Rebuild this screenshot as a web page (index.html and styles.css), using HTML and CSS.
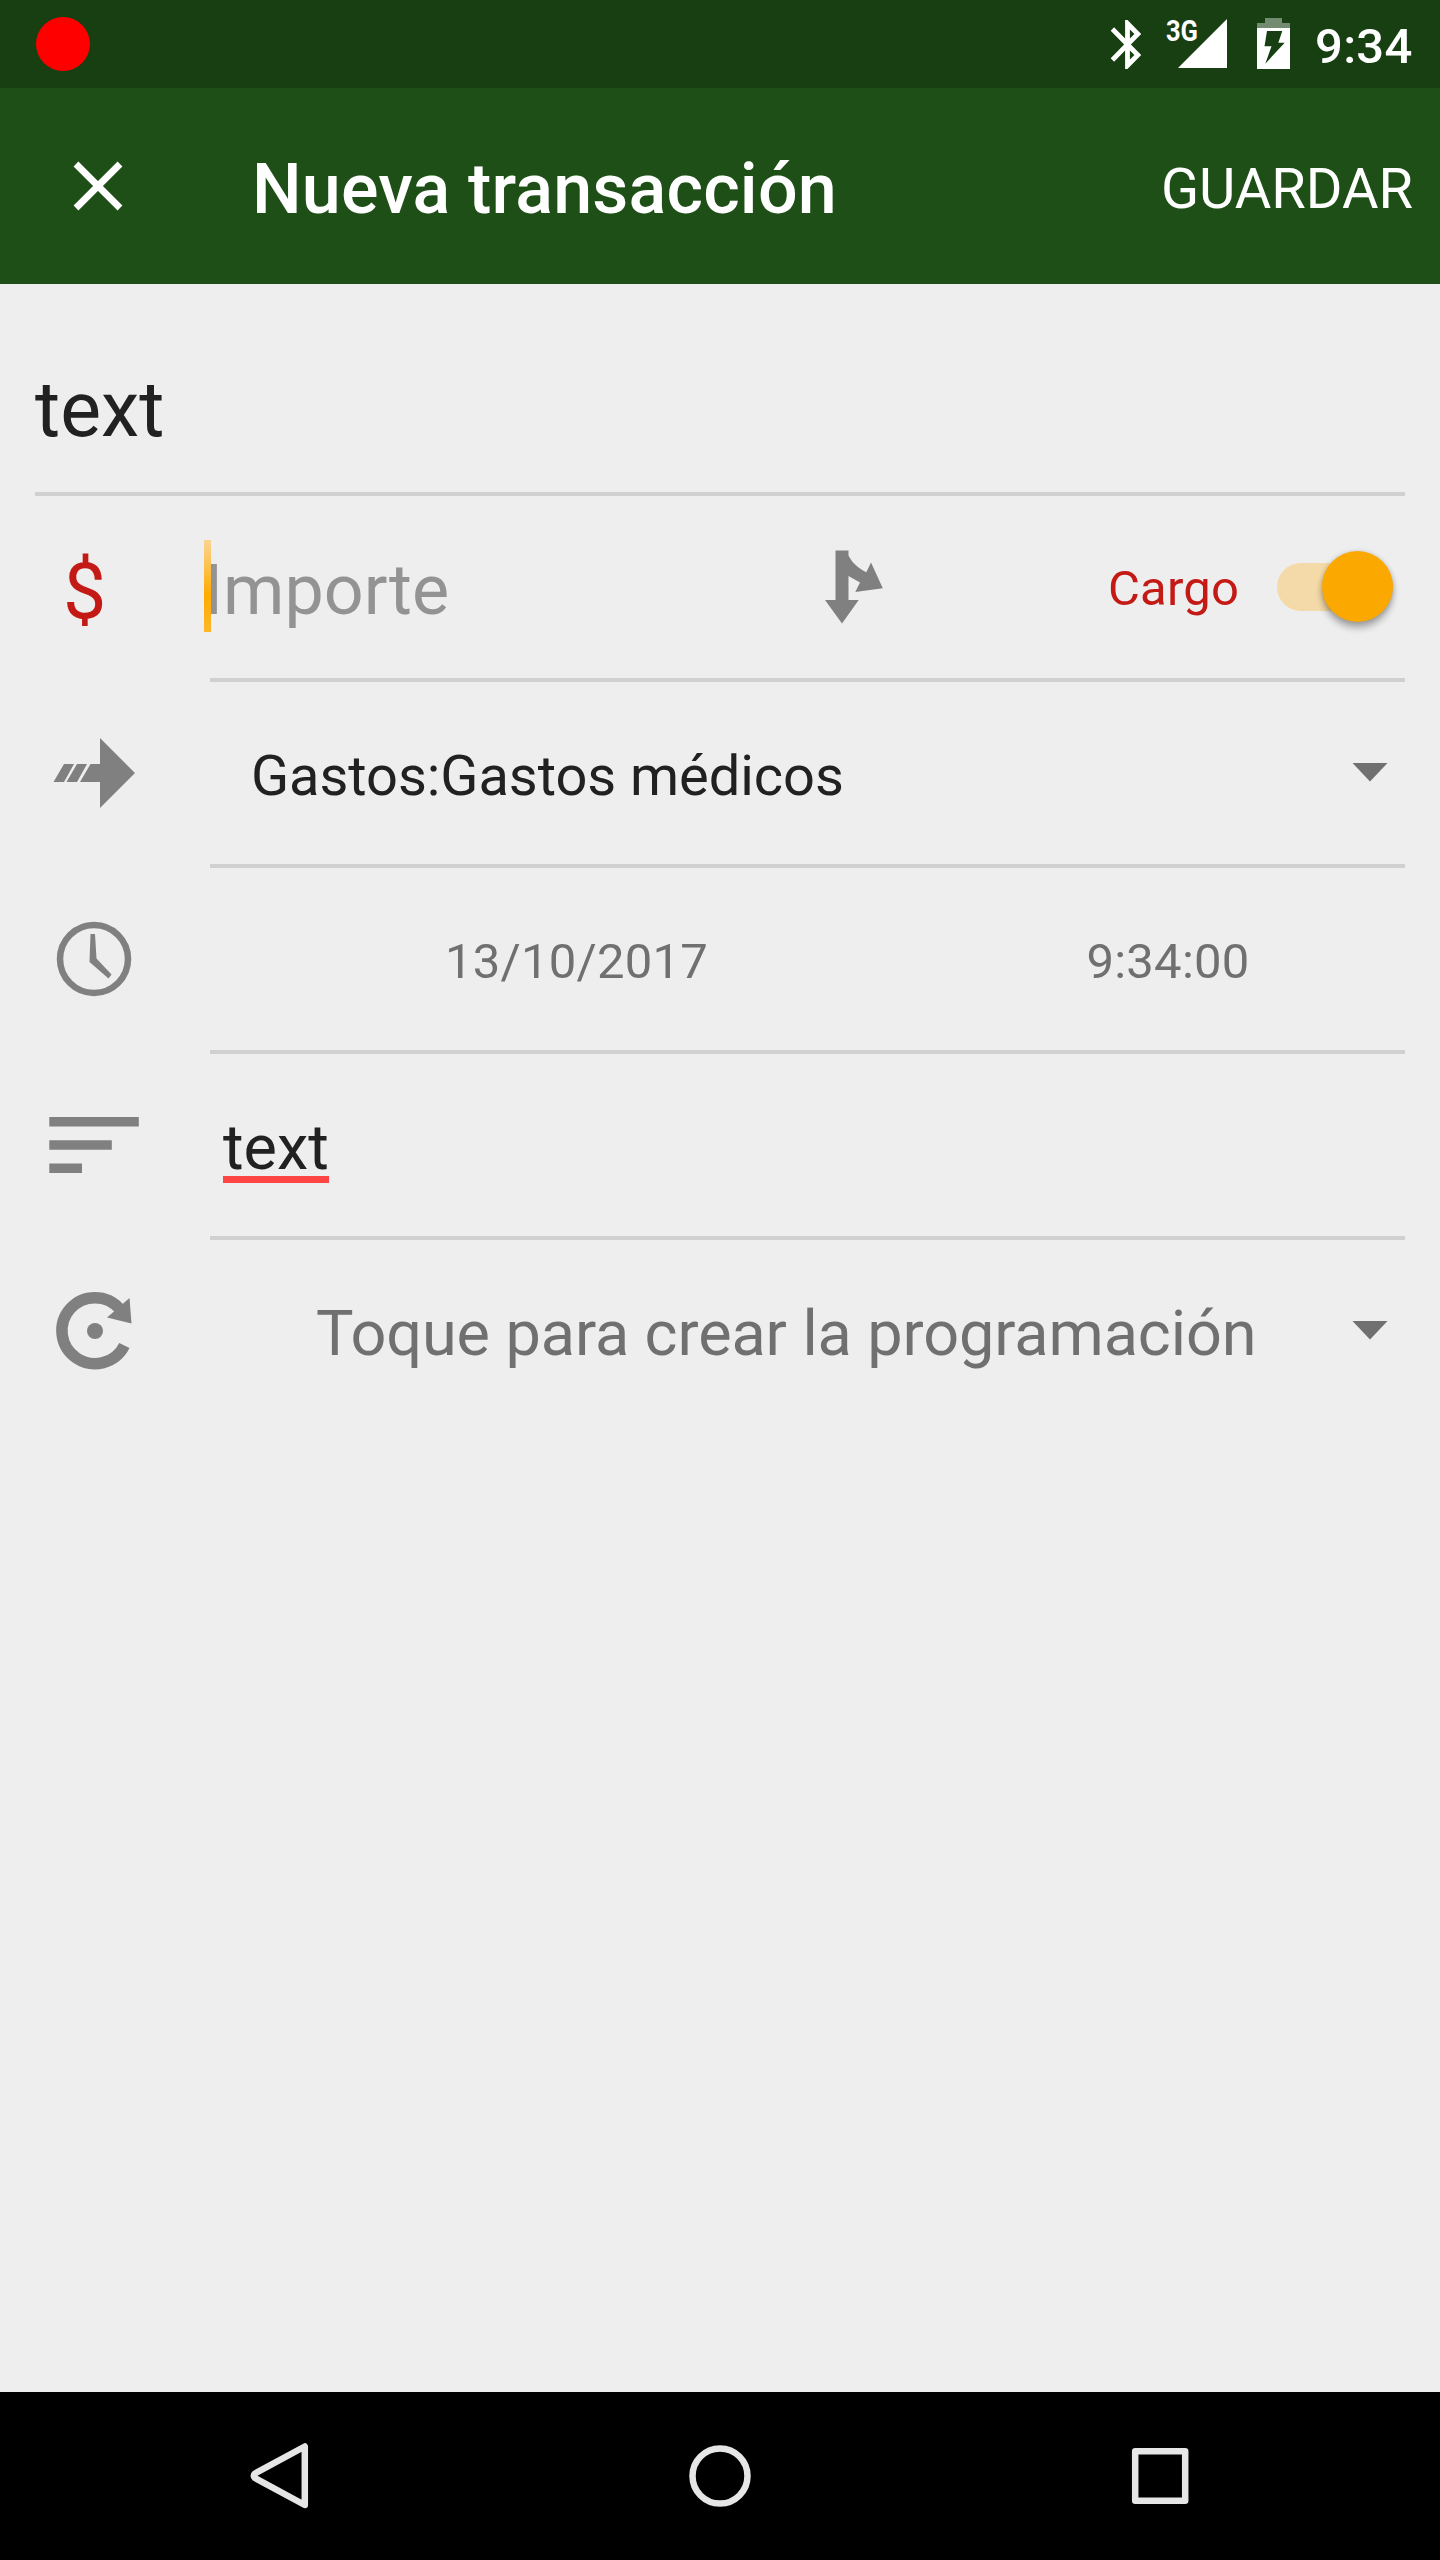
FILE: index.html
```html
<!DOCTYPE html>
<html lang="es">
<head>
<meta charset="utf-8">
<title>Nueva transacción</title>
<link rel="stylesheet" href="styles.css">
</head>
<body>
<div class="screen">
  <div class="status">
    <span class="record"></span>
    <svg class="status-icons" width="200" height="88" viewBox="1100 0 200 88">
      <path fill="#fff" transform="translate(1098.7 15.1) scale(2.4 2.45)" d="M17.71 7.71L12 2h-1v7.59L6.41 5 5 6.41 10.59 12 5 17.59 6.41 19 11 14.41V22h1l5.71-5.71-4.3-4.29 4.3-4.29zM13 5.83l1.88 1.88L13 9.59V5.83zm1.88 10.46L13 18.17v-3.76l1.88 1.88z"/>
      <text class="net" x="1166" y="41" textLength="32" lengthAdjust="spacingAndGlyphs">3G</text>
      <path fill="#fff" d="M1178 68h49V19z"/>
      <path fill="#fff" fill-opacity=".4" d="M1265 18h17v5h8v5h-33v-5h8z"/>
      <path fill="#fff" fill-rule="evenodd" d="M1257 28h33v41h-33zM1267 31l-2.500 15.200h7L1265.300 63.700l19.400-21h-6.400l4-11.700z"/>
    </svg>
    <span class="time">9:34</span>
  </div>
  <header class="toolbar">
    <svg class="close" width="50" height="50" viewBox="73 161 50 50"><path d="M76 164l44 44M120 164l-44 44" stroke="#fff" stroke-width="6.800"/></svg>
    <h1 class="title">Nueva transacción</h1>
    <span class="save">GUARDAR</span>
  </header>
  <main class="form">
    <div class="name">text</div>
    <div class="row">
      <div class="icon currency">$</div>
      <div class="field">
        <div class="amount"><span class="caret"></span>Importe</div>
        <svg class="split" width="60" height="76" viewBox="824 549 60 76"><path fill="#808080" d="M835.500 550.500h13v5c4 8 10 12.500 17.800 16.800l4.700-9.800 11.800 25.800-27.500 3.700 4.700-9.500-11.500-6.500V600h10.200L842 623.500 825 600h10.500z"/></svg>
        <span class="cargo">Cargo</span>
        <span class="switch"><span class="knob"></span></span>
      </div>
    </div>
    <div class="row">
      <svg class="icon" viewBox="35 682 175 182"><path fill="#808080" d="M100 738l35 35-35 35v-26H80l10.500-18h9.500zM64 764h10l-10 18H53.500zM77 764h10l-10 18H66.500z"/></svg>
      <div class="field account"><span>Gastos:Gastos médicos</span><i class="drop"></i></div>
    </div>
    <div class="row">
      <svg class="icon" viewBox="35 868 175 182"><circle cx="94" cy="959" r="34" fill="none" stroke="#808080" stroke-width="6.500"/><path fill="#808080" d="M90.500 934h4.500l1.500 24.500 15 16-3 4L89.500 962z"/></svg>
      <div class="field datetime"><span class="date">13/10/2017</span><span class="hour">9:34:00</span></div>
    </div>
    <div class="row">
      <svg class="icon" viewBox="35 1054 175 182"><path fill="#808080" d="M49.300 1117h89.500v9.500H49.300zM49.300 1140.300h62.500v9.500H49.300zM49.300 1163.600h32.700v9.500H49.300z"/></svg>
      <div class="field notes"><span class="typo">text</span></div>
    </div>
    <div class="row last">
      <svg class="icon" viewBox="35 1240 175 182"><path d="M119.800 1309A33 33 0 1 0 124.400 1345.500" fill="none" stroke="#808080" stroke-width="11.500"/><circle cx="95" cy="1331" r="8" fill="#808080"/><path fill="#808080" d="M129.500 1298l2 25.500-24.500-6z"/></svg>
      <div class="field repeat"><span>Toque para crear la programación</span><i class="drop"></i></div>
    </div>
  </main>
  <nav class="nav">
    <svg width="1440" height="168" viewBox="0 2392 1440 168" fill="none" stroke="#e6e6e6" stroke-width="6.500" stroke-linejoin="round">
      <path d="M304.800 2446.500v58.500L255 2478q-2.500-2.300 0-4.500z"/>
      <circle cx="720" cy="2476" r="27.500"/>
      <rect x="1135.200" y="2451.300" width="50" height="49.500"/>
    </svg>
  </nav>
</div>
</body>
</html>
```
FILE: styles.css
```css
* { box-sizing: border-box; }
body { margin: 0; font-family: Roboto, "Noto Sans", sans-serif; }
.screen { width: 1440px; height: 2560px; display: flex; flex-direction: column; background: #eee; }

.status { height: 88px; background: #173f12; display: flex; align-items: center; padding: 0 26px 0 36px; color: #fff; }
.record { width: 54px; height: 54px; border-radius: 50%; background: #f00; }
.status-icons { margin-left: auto; }
.net { font-size: 29px; font-weight: 700; fill: #fff; }
.time { width: 99px; margin-left: 15px; padding-top: 5px; font-size: 49px; font-weight: 500; line-height: 84px; letter-spacing: .3px; }

.toolbar { height: 196px; background: #1d4f16; color: #fff; display: flex; align-items: center; padding: 0 27px 0 73px; }
.title { margin: 0 0 0 129px; padding-top: 6px; font-size: 70px; font-weight: 500; line-height: 80px; letter-spacing: .18px; }
.save { margin-left: auto; padding-top: 6px; font-size: 56px; line-height: 80px; }

.form { flex: 1; padding: 0 35px; color: #212121; }
.name { height: 212px; padding-top: 44px; line-height: 164px; font-size: 77px; border-bottom: 4px solid #d0d0d0; }
.row { height: 186px; display: flex; }
.icon { width: 175px; height: 182px; flex: none; }
.currency { padding: 5px 0 0 28px; font-size: 77px; line-height: 182px; color: #c41a16; }
.field { flex: 1; display: flex; align-items: center; border-bottom: 4px solid #d0d0d0; line-height: 80px; }
.last .field { border-bottom-color: transparent; }
.field > span, .amount { padding-top: 5px; }

.amount { position: relative; width: 614px; margin-left: -6px; font-size: 70px; color: #939393; }
.caret { position: absolute; left: 0; top: -5px; width: 7px; height: 92px; background: linear-gradient(#f9d592, #ffab00 60%, #fdb62c); }
.split { margin-left: 6px; }
.field > .cargo { margin-left: 224px; padding-top: 4px; font-size: 49px; letter-spacing: .2px; color: #c41a16; }
.field > .switch { width: 116px; height: 48px; margin: 0 12px 0 auto; padding: 0; border-radius: 24px; background: #f4daa8; display: flex; align-items: center; justify-content: flex-end; }
.knob { width: 71px; height: 71px; margin-bottom: 1px; flex: none; border-radius: 50%; background: #fba800; box-shadow: 0 6px 7px rgba(0,0,0,.3), 0 0 5px rgba(0,0,0,.15); }

.account { padding-left: 41px; font-size: 56px; letter-spacing: -.05px; }
.drop { width: 36px; height: 19px; margin: 0 17px 2px auto; background: #707070; clip-path: polygon(0 0, 100% 0, 50% 100%); }
.datetime { font-size: 49px; letter-spacing: .25px; color: #707070; }
.date { width: 733px; text-align: center; }
.hour { flex: 1; padding-right: 12px; text-align: center; }
.notes { padding-left: 13px; font-size: 63px; }
.field > .typo { position: relative; }
.typo::after { content: ""; position: absolute; left: 0; top: 73px; width: 106px; height: 7px; background: #ff4444; }
.repeat { padding-left: 106px; font-size: 63px; letter-spacing: -.1px; color: #707070; }

.nav { height: 168px; background: #000; }
.nav svg { display: block; }
```
